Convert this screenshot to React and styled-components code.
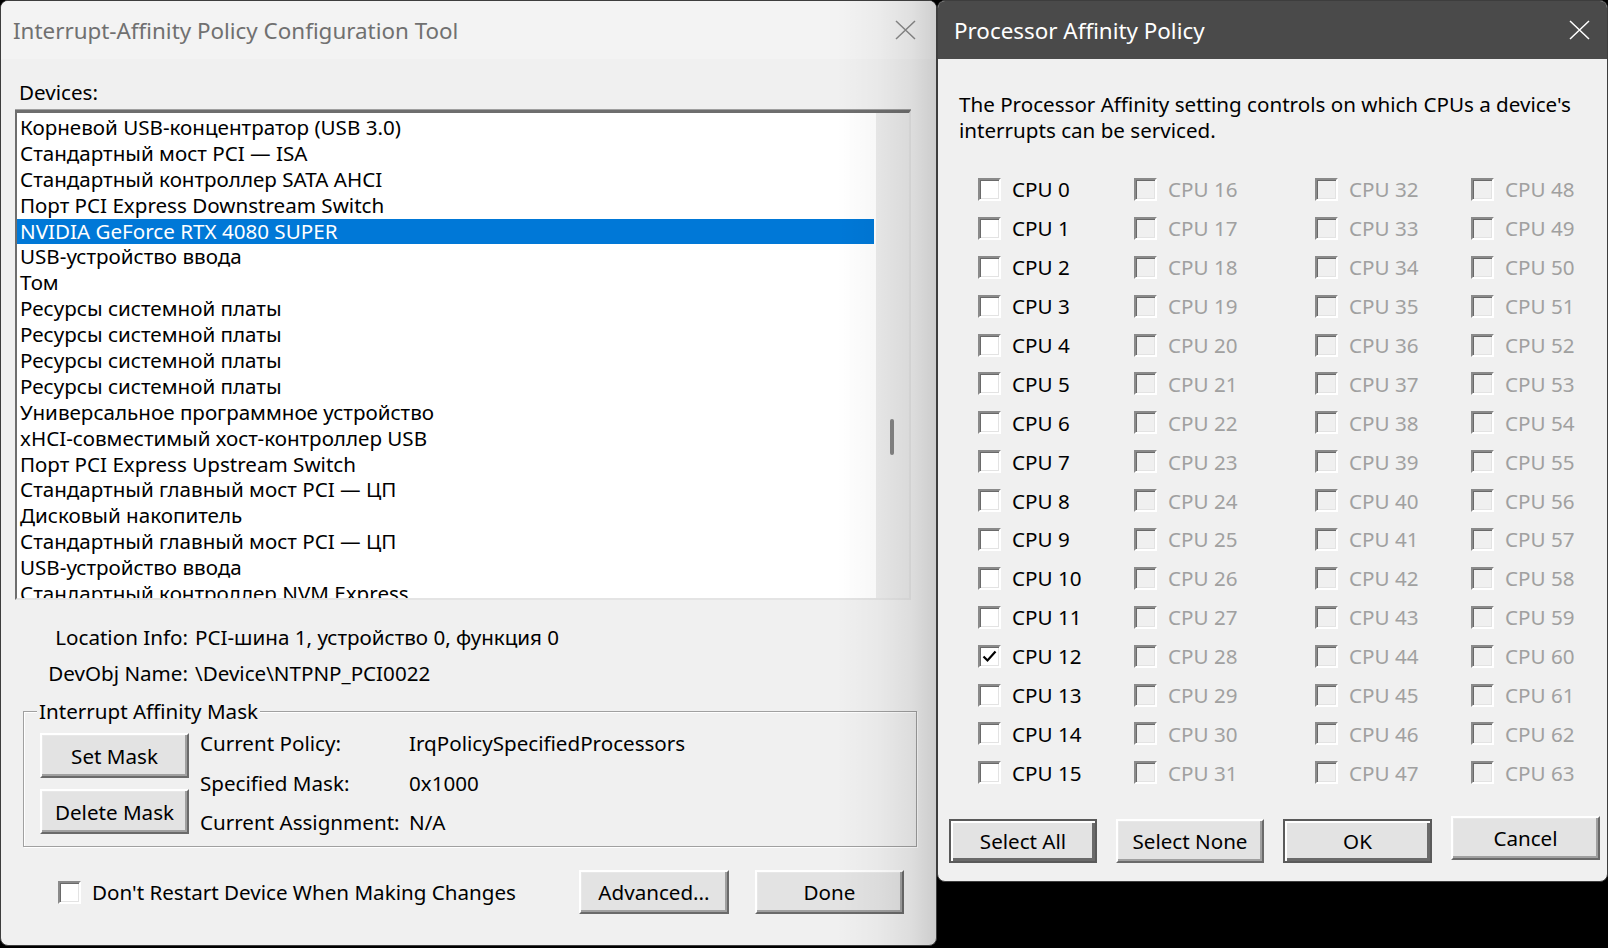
import React from "react";
import styled, { createGlobalStyle, css } from "styled-components";

const GlobalStyle = createGlobalStyle`
  html, body { margin: 0; padding: 0; background: #000; }
  body { font-family: "Noto Sans", "Open Sans", sans-serif; -webkit-font-smoothing: antialiased; }
  * { box-sizing: border-box; }
`;

const Screen = styled.div`
  width: 1608px;
  height: 948px;
  display: flex;
  align-items: flex-start;
  background: #000;
  overflow: hidden;
`;

const Window = styled.section`
  position: relative;
  flex-shrink: 0;
  width: ${(p) => p.$w}px;
  height: ${(p) => p.$h}px;
  background: #f0f0f0;
  border: 1px solid #3d3d3d;
  border-radius: 8px;
  display: flex;
  flex-direction: column;
  overflow: hidden;
  color: #000;
  font-size: 20.6px;
`;

const TitleBar = styled.header`
  flex-shrink: 0;
  height: 58px;
  display: flex;
  align-items: center;
  justify-content: space-between;
  padding: 0 ${(p) => p.$padR}px 0 ${(p) => p.$padL}px;
  background: ${(p) => (p.$dark ? "#4a4a4a" : "#f3f3f3")};
  color: ${(p) => (p.$dark ? "#ffffff" : "#707070")};
  font-size: 22.4px;
  white-space: nowrap;
`;

const CloseIcon = ({ color }) => (
  <svg width="21" height="20" viewBox="0 0 21 20">
    <path d="M1 1 L20 19 M20 1 L1 19" stroke={color} strokeWidth="1.5" fill="none" />
  </svg>
);

const ShadowOverlay = styled.div`
  position: absolute;
  top: 0;
  bottom: 0;
  right: 0;
  width: 100px;
  pointer-events: none;
  background: linear-gradient(
    to right,
    rgba(0, 0, 0, 0) 0%,
    rgba(0, 0, 0, 0.03) 42%,
    rgba(0, 0, 0, 0.08) 75%,
    rgba(0, 0, 0, 0.15) 100%
  );
`;

/* ---------- left window ---------- */

const LeftBody = styled.div`
  display: flex;
  flex-direction: column;
  padding: 20px 0 0 14px;
`;

const Caption = styled.div`
  height: 26px;
  line-height: 26px;
  padding-left: 4px;
`;

const ListBox = styled.div`
  margin-top: 5px;
  width: 896px;
  height: 490px;
  display: flex;
  background: #fff;
  border-style: solid;
  border-width: 3px 2px 2px 2px;
  border-color: #6e6e6e #e4e4e4 #e4e4e4 #6e6e6e;
  box-shadow: 0 -1px 0 #a0a0a0;
  overflow: hidden;
`;

const ListItems = styled.div`
  flex: 1;
  padding-top: 2px;
  overflow: hidden;
`;

const ListRow = styled.div`
  height: 25.9px;
  line-height: 25.9px;
  margin-right: 2px;
  padding-left: 3px;
  white-space: nowrap;
  background: ${(p) => (p.$selected ? "#0078d7" : "transparent")};
  color: ${(p) => (p.$selected ? "#fff" : "#000")};
`;

const ScrollTrack = styled.div`
  width: 33px;
  flex-shrink: 0;
  background: #ececec;
  padding: 306px 0 0 14px;
`;

const ScrollThumb = styled.div`
  width: 4px;
  height: 36px;
  border-radius: 2px;
  background: #858585;
`;

const InfoBlock = styled.div`
  margin-top: 24px;
  display: grid;
  grid-template-columns: 173px auto;
  column-gap: 7px;
  row-gap: 10px;
  line-height: 26px;
  white-space: nowrap;
`;

const InfoLabel = styled.span`
  text-align: right;
`;

const GroupBox = styled.fieldset`
  margin: 12px 0 0 8px;
  width: 894px;
  padding: 6px 10px 11px 16px;
  border: 1px solid #a0a0a0;
  box-shadow: inset 1px 1px 0 #fff, 1px 1px 0 #fff;
  min-inline-size: 0;
`;

const GroupLegend = styled.legend`
  padding: 0 2px;
  margin-left: -3px;
  line-height: 26px;
  background: #f0f0f0;
`;

const MaskRow = styled.div`
  display: flex;
  align-items: flex-start;
  gap: 11px;
`;

const ButtonColumn = styled.div`
  margin-top: 3px;
  display: flex;
  flex-direction: column;
  gap: 11px;
`;

const PolicyGrid = styled.div`
  display: grid;
  grid-template-columns: 209px auto;
  grid-auto-rows: 26px;
  row-gap: 13.5px;
  line-height: 26px;
  white-space: nowrap;
`;

const BottomRow = styled.div`
  margin-top: 23px;
  width: 889px;
  height: 44px;
  padding-left: 43px;
  display: flex;
  align-items: center;
`;

const CheckLabel = styled.span`
  margin-left: 11px;
  line-height: 26px;
  white-space: nowrap;
  color: ${(p) => (p.$disabled ? "#a0a0a0" : "#000")};
`;

const Spacer = styled.div`
  flex: ${(p) => (p.$fixed ? `0 0 ${p.$fixed}px` : "1")};
`;

/* ---------- shared controls ---------- */

const Button = styled.button`
  flex-shrink: 0;
  width: ${(p) => p.$w}px;
  height: ${(p) => p.$h}px;
  margin-top: ${(p) => p.$shift || 0}px;
  padding: 0;
  font-family: inherit;
  font-size: 20.6px;
  color: #000;
  background: #e3e3e3;
  border: 2px solid;
  border-color: #ffffff #6a6a6a #6a6a6a #ffffff;
  box-shadow: inset -2px -2px 0 #a0a0a0, inset 1px 1px 0 #e8e8e8;
  ${(p) =>
    p.$strong &&
    css`
      border-color: #5a5a5a;
      box-shadow: inset 2px 2px 0 #ffffff, inset -3px -3px 0 #6a6a6a;
    `}
`;

const Box = styled.span`
  position: relative;
  flex-shrink: 0;
  width: 23px;
  height: 23px;
  display: inline-flex;
  align-items: center;
  justify-content: center;
  background: ${(p) => (p.$disabled ? "#f0f0f0" : "#ffffff")};
  border: 2px solid;
  border-color: #8a8a8a #ffffff #ffffff #8a8a8a;
  box-shadow: inset 1px 1px 0 #6a6a6a, inset -1px -1px 0 #e3e3e3;
`;

const CheckBox = ({ disabled, checked }) => (
  <Box $disabled={disabled}>
    {checked && (
      <svg width="15" height="13" viewBox="0 0 15 13">
        <path d="M1.5 6.5 L5.5 10.5 L13.5 1.5" stroke="#000" strokeWidth="2.2" fill="none" />
      </svg>
    )}
  </Box>
);

/* ---------- right window ---------- */

const RightBody = styled.div`
  display: flex;
  flex-direction: column;
`;

const Description = styled.p`
  margin: 32px 0 0 21px;
  line-height: 26px;
  white-space: nowrap;
`;

const CpuGrid = styled.div`
  margin-top: 27px;
  padding-left: 40px;
  display: grid;
  grid-template-columns: 156px 181px 156px 1fr;
  grid-template-rows: repeat(16, 38.9px);
  grid-auto-flow: column;
`;

const CpuItem = styled.label`
  display: flex;
  align-items: center;
`;

const DialogButtons = styled.div`
  margin-top: 27px;
  padding-left: 11px;
  display: flex;
  align-items: flex-start;
  gap: 19px;
`;

const devices = [
  "Корневой USB-концентратор (USB 3.0)",
  "Стандартный мост PCI — ISA",
  "Стандартный контроллер SATA AHCI",
  "Порт PCI Express Downstream Switch",
  "NVIDIA GeForce RTX 4080 SUPER",
  "USB-устройство ввода",
  "Том",
  "Ресурсы системной платы",
  "Ресурсы системной платы",
  "Ресурсы системной платы",
  "Ресурсы системной платы",
  "Универсальное программное устройство",
  "xHCI-совместимый хост-контроллер USB",
  "Порт PCI Express Upstream Switch",
  "Стандартный главный мост PCI — ЦП",
  "Дисковый накопитель",
  "Стандартный главный мост PCI — ЦП",
  "USB-устройство ввода",
  "Стандартный контроллер NVM Express",
];

const cpus = Array.from({ length: 64 }, (_, i) => i);

export default function App() {
  return (
    <>
      <GlobalStyle />
      <Screen>
        <Window $w={937} $h={946}>
          <TitleBar $padL={12} $padR={20}>
            <span>Interrupt-Affinity Policy Configuration Tool</span>
            <CloseIcon color="#8a8a8a" />
          </TitleBar>
          <LeftBody>
            <Caption>Devices:</Caption>
            <ListBox>
              <ListItems>
                {devices.map((d, i) => (
                  <ListRow key={i} $selected={i === 4}>
                    {d}
                  </ListRow>
                ))}
              </ListItems>
              <ScrollTrack>
                <ScrollThumb />
              </ScrollTrack>
            </ListBox>
            <InfoBlock>
              <InfoLabel>Location Info:</InfoLabel>
              <span>PCI-шина 1, устройство 0, функция 0</span>
              <InfoLabel>DevObj Name:</InfoLabel>
              <span>\Device\NTPNP_PCI0022</span>
            </InfoBlock>
            <GroupBox>
              <GroupLegend>Interrupt Affinity Mask</GroupLegend>
              <MaskRow>
                <ButtonColumn>
                  <Button $w={149} $h={45}>Set Mask</Button>
                  <Button $w={149} $h={45}>Delete Mask</Button>
                </ButtonColumn>
                <PolicyGrid>
                  <span>Current Policy:</span>
                  <span>IrqPolicySpecifiedProcessors</span>
                  <span>Specified Mask:</span>
                  <span>0x1000</span>
                  <span>Current Assignment:</span>
                  <span>N/A</span>
                </PolicyGrid>
              </MaskRow>
            </GroupBox>
            <BottomRow>
              <CheckBox />
              <CheckLabel>Don't Restart Device When Making Changes</CheckLabel>
              <Spacer />
              <Button $w={150} $h={44}>Advanced...</Button>
              <Spacer $fixed={26} />
              <Button $w={149} $h={44}>Done</Button>
            </BottomRow>
          </LeftBody>
          <ShadowOverlay />
        </Window>

        <Window $w={671} $h={882}>
          <TitleBar $dark $padL={16} $padR={17}>
            <span>Processor Affinity Policy</span>
            <CloseIcon color="#ffffff" />
          </TitleBar>
          <RightBody>
            <Description>
              The Processor Affinity setting controls on which CPUs a device's
              <br />
              interrupts can be serviced.
            </Description>
            <CpuGrid>
              {cpus.map((n) => {
                const disabled = n >= 16;
                return (
                  <CpuItem key={n}>
                    <CheckBox disabled={disabled} checked={n === 12} />
                    <CheckLabel $disabled={disabled}>CPU {n}</CheckLabel>
                  </CpuItem>
                );
              })}
            </CpuGrid>
            <DialogButtons>
              <Button $w={148} $h={44} $strong>Select All</Button>
              <Button $w={148} $h={44}>Select None</Button>
              <Button $w={149} $h={44} $strong>OK</Button>
              <Button $w={149} $h={44} $shift={-3}>Cancel</Button>
            </DialogButtons>
          </RightBody>
        </Window>
      </Screen>
    </>
  );
}
